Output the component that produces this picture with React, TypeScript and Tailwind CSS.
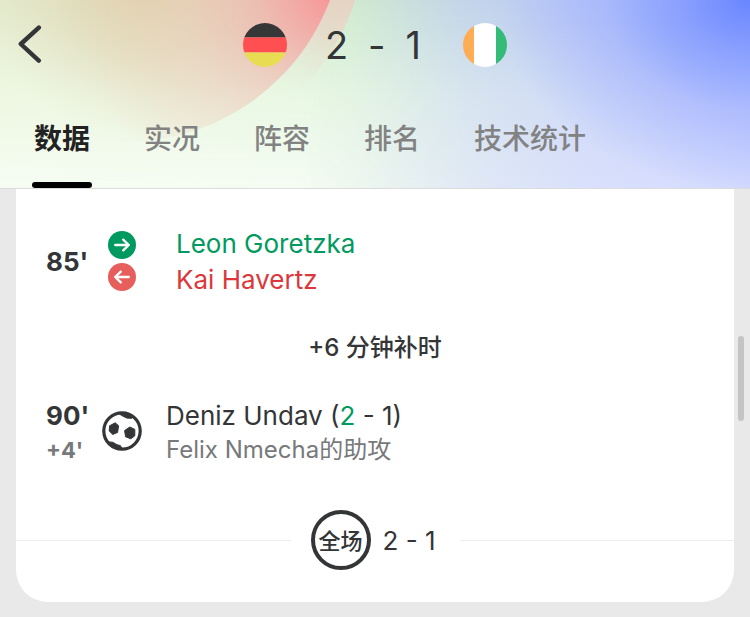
type Tab = { id: string; label: string }

const tabs: Tab[] = [
  { id: 'data', label: '数据' },
  { id: 'live', label: '实况' },
  { id: 'lineup', label: '阵容' },
  { id: 'table', label: '排名' },
  { id: 'stats', label: '技术统计' },
]

function HeaderBackdrop() {
  return (
    <div className="absolute inset-0 overflow-hidden bg-[linear-gradient(90deg,#e3eacb_0%,#d0ead0_47%,#c3d5ea_62%,#bccaf8_78%,#b0beff_100%)]">
      <div className="absolute inset-0 bg-[linear-gradient(180deg,#f5fff000_0%,#f5ffefa0_50%,#f7fdf5f0_100%)] [mask-image:linear-gradient(90deg,black_40%,#000000a0_62%,#00000010_100%)]" />
      <div className="absolute inset-0 bg-[linear-gradient(180deg,#dfe3ff00_10%,#dfe3ffb0_100%)] [mask-image:linear-gradient(90deg,transparent_40%,black_85%)]" />
      <div className="absolute inset-0 bg-[radial-gradient(ellipse_250px_190px_at_100%_0%,#6a86ff_0%,#7590ffb8_25%,#8ca0ff60_58%,#a5b4ff00_100%)]" />
      <svg className="absolute left-0 top-0" width="400" height="188" viewBox="0 0 400 188" aria-hidden="true">
        <defs>
          <radialGradient id="outer" gradientUnits="userSpaceOnUse" cx="345" cy="-20" r="120">
            <stop offset="0" stopColor="#ecc8bc" stopOpacity="0.85" />
            <stop offset="0.5" stopColor="#ead6c8" stopOpacity="0.7" />
            <stop offset="1" stopColor="#ebe8d8" stopOpacity="0" />
          </radialGradient>
          <radialGradient id="inner" gradientUnits="userSpaceOnUse" cx="335" cy="-10" r="260">
            <stop offset="0" stopColor="#f98e92" stopOpacity="0.95" />
            <stop offset="0.3" stopColor="#f2aea8" stopOpacity="0.7" />
            <stop offset="0.6" stopColor="#eeccbc" stopOpacity="0.5" />
            <stop offset="1" stopColor="#ecd8c0" stopOpacity="0" />
          </radialGradient>
          <radialGradient id="khaki" gradientUnits="userSpaceOnUse" cx="150" cy="-20" r="165">
            <stop offset="0" stopColor="#e0c090" stopOpacity="0.65" />
            <stop offset="0.5" stopColor="#e4ccaa" stopOpacity="0.42" />
            <stop offset="1" stopColor="#e8dcc0" stopOpacity="0" />
          </radialGradient>
        </defs>
        <circle cx="125" cy="-77" r="243" fill="url(#outer)" />
        <circle cx="125" cy="-77" r="219" fill="url(#khaki)" />
        <circle cx="125" cy="-77" r="219" fill="url(#inner)" />
      </svg>
    </div>
  )
}

function GermanyFlag() {
  return (
    <svg width="44" height="44" viewBox="0 0 44 44" role="img" aria-label="德国">
      <clipPath id="de">
        <circle cx="22" cy="22" r="22" />
      </clipPath>
      <g clipPath="url(#de)">
        <path d="M0 0h44v14.5H0z" fill="#373737" />
        <path d="M0 14.5h44v15H0z" fill="#ff4f50" />
        <path d="M0 29.5h44V44H0z" fill="#e7dc52" />
      </g>
    </svg>
  )
}

function IvoryCoastFlag() {
  return (
    <svg width="44" height="44" viewBox="0 0 44 44" role="img" aria-label="科特迪瓦">
      <clipPath id="ci">
        <circle cx="22" cy="22" r="22" />
      </clipPath>
      <g clipPath="url(#ci)">
        <path d="M0 0h11v44H0z" fill="#ffad55" />
        <path d="M11 0h22v44H11z" fill="#fff" />
        <path d="M33 0h11v44H33z" fill="#35bb78" />
      </g>
    </svg>
  )
}

function SubIcon({ direction }: { direction: 'in' | 'out' }) {
  return (
    <svg width="28" height="28" viewBox="0 0 28 28" aria-hidden="true">
      <circle cx="14" cy="14" r="14" fill={direction === 'in' ? '#009a60' : '#e75f5d'} />
      <path
        d={direction === 'in' ? 'M7.2 14h13.6M15.2 8.6l5.6 5.4-5.6 5.4' : 'M20.8 14H7.2M12.8 8.6L7.2 14l5.6 5.4'}
        fill="none"
        stroke="#fff"
        strokeWidth="2.3"
        strokeLinecap="round"
        strokeLinejoin="round"
      />
    </svg>
  )
}

function BallIcon() {
  return (
    <svg width="40" height="40" viewBox="0 0 40 40" aria-hidden="true">
      <circle cx="20" cy="20" r="18.2" fill="#fff" stroke="#333537" strokeWidth="3.2" />
      <g fill="#333537" stroke="#333537" strokeWidth="1" strokeLinejoin="round">
        <path d="M7.6 14.8l5.6-3 3.4 3-1 6.6-4.8 2-3.6-3.4z" />
        <path d="M22.6 19.6l5.2-3.6 5 2.4v6.4l-4 3-5.2-2z" />
        <path d="M16.5 2.5h6l8.5 3.2-1.2 1.6-5-.2-4-2z" />
        <path d="M7 31l3.6.2 4.6 2.6 3.2.8 1.6 3-6-.6z" />
      </g>
    </svg>
  )
}

export default function App() {
  return (
    <div className="relative flex min-h-screen flex-col bg-[#e9e9e9] font-['Inter','Noto_Sans_CJK_SC',sans-serif] text-[#333537]">
      <header className="relative border-b border-[#dcdcdc]">
        <HeaderBackdrop />
        <div className="relative">
          <div className="grid grid-cols-[1fr_auto_1fr] items-center px-4 pt-[22px]">
            <button type="button" aria-label="返回" className="w-7">
              <svg width="28" height="40" viewBox="0 0 28 40" aria-hidden="true">
                <path d="M22.8 2.6L4.8 19l18 16.6" fill="none" stroke="#333537" strokeWidth="4.4" strokeLinecap="round" strokeLinejoin="round" />
              </svg>
            </button>
            <div className="flex items-center">
              <GermanyFlag />
              <span className="flex w-44 justify-center gap-5 pr-1 text-[38px] leading-[46px]">
                <span>2</span>
                <span>-</span>
                <span>1</span>
              </span>
              <IvoryCoastFlag />
            </div>
          </div>
          <nav className="flex gap-[54px] px-[34px] pt-12">
            {tabs.map((tab, i) => (
              <a
                key={tab.id}
                href={`#${tab.id}`}
                aria-current={i === 0 ? 'page' : undefined}
                className={
                  i === 0
                    ? 'relative pb-[26px] text-[28px] leading-[46px] font-bold whitespace-nowrap text-[#222]'
                    : 'pb-[26px] text-[28px] leading-[46px] font-medium whitespace-nowrap text-[#828282]'
                }
              >
                {tab.label}
                {i === 0 && <span className="absolute -inset-x-0.5 bottom-0 h-1.5 rounded-full bg-black" />}
              </a>
            ))}
          </nav>
        </div>
      </header>

      <main className="mx-4 mb-4 rounded-b-[32px] bg-white pt-[35px] pb-8">
        <section className="flex items-center">
          <time className="w-[92px] pl-[30px] text-[26px] font-bold">85'</time>
          <div className="flex flex-col gap-1">
            <SubIcon direction="in" />
            <SubIcon direction="out" />
          </div>
          <div className="pt-0.5 pl-10 text-[26px] leading-9">
            <p className="text-[#009a60]">Leon Goretzka</p>
            <p className="text-[#dc383c]">Kai Havertz</p>
          </div>
        </section>

        <p className="pt-8 text-center text-2xl leading-9 font-medium">+6 分钟补时</p>

        <section className="flex items-center pt-[30px]">
          <div className="w-[86px] pt-0.5 pl-[30px] font-bold">
            <p className="text-[26px] leading-9">90'</p>
            <p className="text-[22px] leading-8 text-[#77797b]">+4'</p>
          </div>
          <BallIcon />
          <div className="pt-0.5 pl-6">
            <p className="text-[26px] leading-9">
              Deniz Undav (<span className="text-[#009a60]">2</span> - 1)
            </p>
            <p className="text-2xl leading-8 text-[#77797b]">Felix Nmecha的助攻</p>
          </div>
        </section>

        <section className="flex items-center pt-11">
          <div className="h-px flex-1 bg-[#eee]" />
          <div className="flex items-center gap-3 pr-6 pl-5">
            <span className="flex size-[60px] items-center justify-center rounded-full border-4 border-[#333537] pt-0.5 text-[22px] font-medium whitespace-nowrap">
              全场
            </span>
            <span className="text-[26px]">2 - 1</span>
          </div>
          <div className="h-px flex-1 bg-[#eee]" />
        </section>
      </main>

      <div className="absolute top-[336px] right-1.5 h-[85px] w-1.5 rounded-full bg-[#c4c4c4]" />
    </div>
  )
}
